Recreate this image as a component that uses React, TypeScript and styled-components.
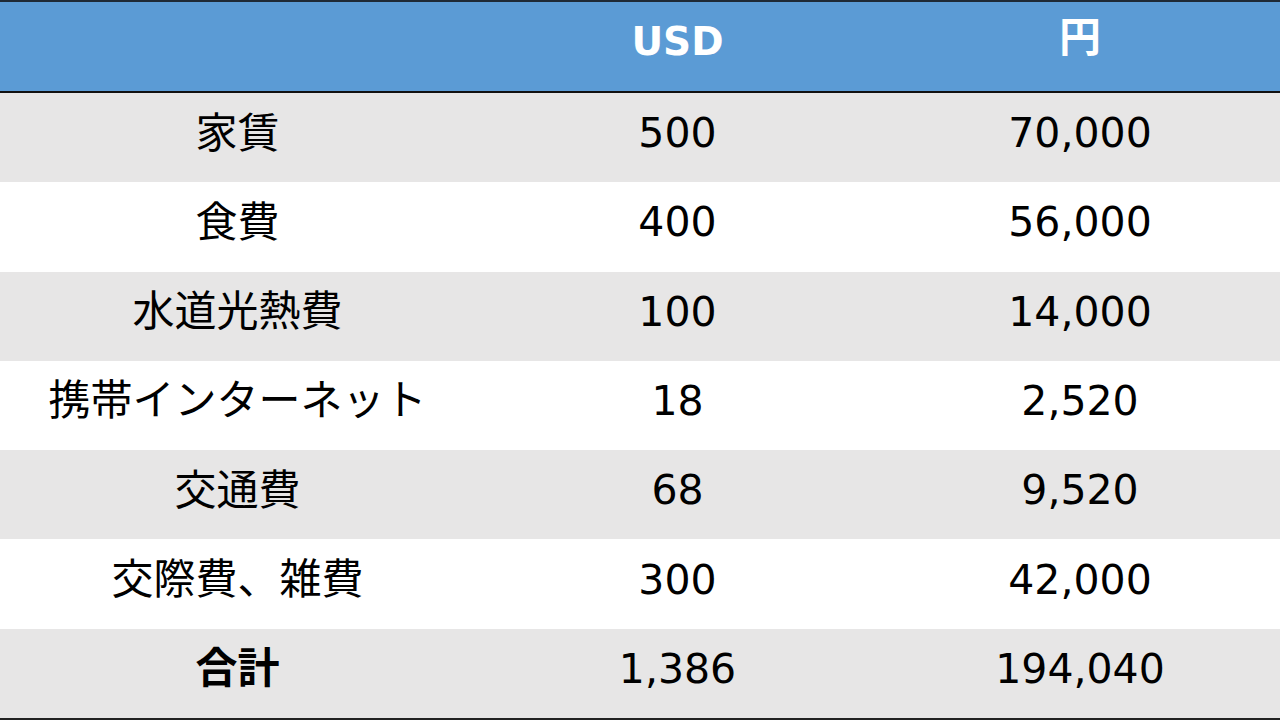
import React from "react";
import styled, { createGlobalStyle } from "styled-components";

const GlobalStyle = createGlobalStyle`
  html, body {
    margin: 0;
    padding: 0;
    background: #ffffff;
  }
  body {
    font-family: "DejaVu Sans", "Noto Sans CJK JP", sans-serif;
  }
`;

interface Row {
  label: string;
  usd: string;
  yen: string;
}

const rows: Row[] = [
  { label: "家賃", usd: "500", yen: "70,000" },
  { label: "食費", usd: "400", yen: "56,000" },
  { label: "水道光熱費", usd: "100", yen: "14,000" },
  { label: "携帯インターネット", usd: "18", yen: "2,520" },
  { label: "交通費", usd: "68", yen: "9,520" },
  { label: "交際費、雑費", usd: "300", yen: "42,000" },
];

const Sheet = styled.div`
  width: 1280px;
  height: 720px;
  display: flex;
  flex-direction: column;
  border-top: 2px solid #1f2a36;
  border-bottom: 2px solid #222222;
  box-sizing: border-box;
  overflow: hidden;
`;

const Line = styled.div<{ $tone: "head" | "gray" | "white" }>`
  display: grid;
  grid-template-columns: 475px 405px 400px;
  align-items: center;
  flex: ${({ $tone }) => ($tone === "head" ? "0 0 89px" : "1 1 0")};
  background: ${({ $tone }) =>
    $tone === "head" ? "#5b9bd5" : $tone === "gray" ? "#e7e6e6" : "#ffffff"};
  border-bottom: ${({ $tone }) => ($tone === "head" ? "2px solid #111111" : "none")};
`;

// the lift pushes glyphs up a little so they sit like the reference
const Cell = styled.div<{ $bold?: boolean; $head?: boolean }>`
  text-align: center;
  font-family: "DejaVu Sans", "Noto Sans CJK JP", sans-serif;
  font-size: ${({ $head }) => ($head ? "39px" : "41px")};
  font-weight: ${({ $bold }) => ($bold ? 700 : 400)};
  color: ${({ $head }) => ($head ? "#ffffff" : "#000000")};
  line-height: 1;
  padding-bottom: ${({ $head }) => ($head ? "10px" : "8px")};
`;

const Label = styled(Cell)`
  font-family: "Noto Sans CJK JP", sans-serif;
  font-size: 42px;
  padding-bottom: ${({ $head }) => ($head ? "26px" : "16px")};
`;

export default function App() {
  return (
    <>
      <GlobalStyle />
      <Sheet>
        <Line $tone="head">
          <Cell $head $bold></Cell>
          <Cell $head $bold>USD</Cell>
          <Label $head $bold>円</Label>
        </Line>
        {rows.map((r, i) => (
          <Line key={r.label} $tone={i % 2 === 0 ? "gray" : "white"}>
            <Label>{r.label}</Label>
            <Cell>{r.usd}</Cell>
            <Cell>{r.yen}</Cell>
          </Line>
        ))}
        <Line $tone="gray">
          <Label $bold>合計</Label>
          <Cell>1,386</Cell>
          <Cell>194,040</Cell>
        </Line>
      </Sheet>
    </>
  );
}
